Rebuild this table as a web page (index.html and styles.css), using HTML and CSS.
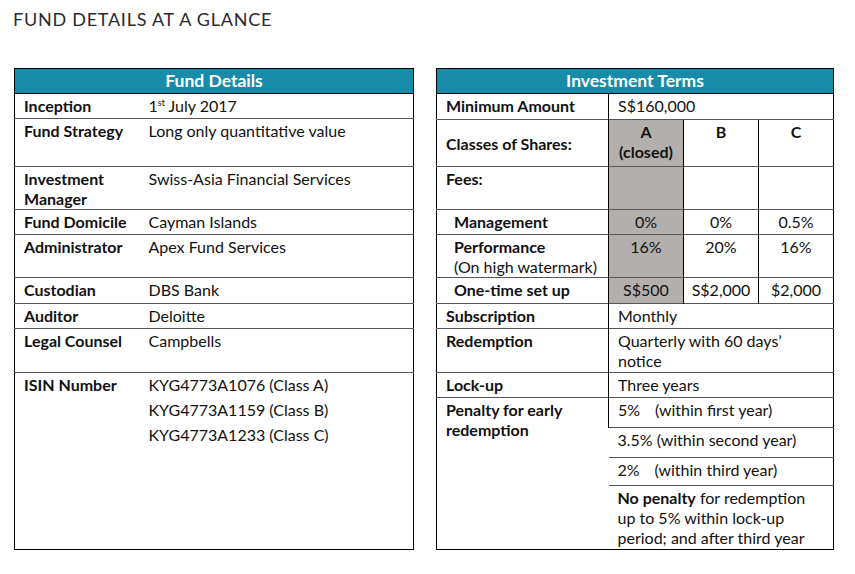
FILE: index.html
```html
<!DOCTYPE html>
<html lang="en">
  <head>
    <meta charset="UTF-8" />
    <meta name="viewport" content="width=device-width, initial-scale=1.0" />
    <title>Fund Details at a Glance</title>
    <link rel="stylesheet" href="styles.css">
  </head>
  <body>
    <div class="page">
      <h1 class="title">FUND DETAILS AT A GLANCE</h1>

      <div class="tables">
        <table class="facts details">
          <colgroup>
            <col class="details-label" />
            <col />
          </colgroup>
          <tr class="head"><th colspan="2">Fund Details</th></tr>
          <tr class="r25"><td class="label">Inception</td><td>1<sup>st</sup> July 2017</td></tr>
          <tr class="r48"><td class="label">Fund Strategy</td><td>Long only quantitative value</td></tr>
          <tr class="r43"><td class="label">Investment Manager</td><td>Swiss-Asia Financial Services</td></tr>
          <tr class="r25"><td class="label">Fund Domicile</td><td>Cayman Islands</td></tr>
          <tr class="r43"><td class="label">Administrator</td><td>Apex Fund Services</td></tr>
          <tr class="r26"><td class="label">Custodian</td><td>DBS Bank</td></tr>
          <tr class="r25"><td class="label">Auditor</td><td>Deloitte</td></tr>
          <tr class="r44"><td class="label">Legal Counsel</td><td>Campbells</td></tr>
          <tr class="r177">
            <td class="label">ISIN Number</td>
            <td>
              <div class="isin">KYG4773A1076 (Class A)</div>
              <div class="isin">KYG4773A1159 (Class B)</div>
              <div class="isin">KYG4773A1233 (Class C)</div>
            </td>
          </tr>
        </table>

        <table class="facts terms">
          <colgroup>
            <col class="terms-label" />
            <col class="share" />
            <col class="share" />
            <col class="share" />
          </colgroup>
          <tr class="head"><th colspan="4">Investment Terms</th></tr>
          <tr class="r26"><td class="label">Minimum Amount</td><td colspan="3">S$160,000</td></tr>
          <tr class="r47">
            <td class="label middle">Classes of Shares:</td>
            <td class="closed col bold">A<br />(closed)</td>
            <td class="col bold">B</td>
            <td class="col bold">C</td>
          </tr>
          <tr class="r43"><td class="label">Fees:</td><td class="closed"></td><td class="col"></td><td class="col"></td></tr>
          <tr class="r25">
            <td class="label sub">Management</td>
            <td class="closed col">0%</td><td class="col">0%</td><td class="col">0.5%</td>
          </tr>
          <tr class="r43">
            <td class="label sub">Performance<br /><span class="note">(On high watermark)</span></td>
            <td class="closed col">16%</td><td class="col">20%</td><td class="col">16%</td>
          </tr>
          <tr class="r26">
            <td class="label sub">One-time set up</td>
            <td class="closed col">S$500</td><td class="col">S$2,000</td><td class="col">$2,000</td>
          </tr>
          <tr class="r25"><td class="label">Subscription</td><td colspan="3">Monthly</td></tr>
          <tr class="r44"><td class="label">Redemption</td><td colspan="3">Quarterly with 60 days’<br />notice</td></tr>
          <tr class="r25"><td class="label">Lock-up</td><td colspan="3">Three years</td></tr>
          <tr class="r30">
            <td class="label" rowspan="4">Penalty for early<br />redemption</td>
            <td colspan="3"><span class="rate">5%</span>(within first year)</td>
          </tr>
          <tr class="r30"><td colspan="3">3.5% (within second year)</td></tr>
          <tr class="r28"><td colspan="3"><span class="rate">2%</span>(within third year)</td></tr>
          <tr class="r64">
            <td colspan="3"><b>No penalty</b> for redemption<br />up to 5% within lock-up<br />period; and after third year</td>
          </tr>
        </table>
      </div>
    </div>
  </body>
</html>
```

FILE: styles.css
```css
* {
  margin: 0;
  padding: 0;
  box-sizing: border-box;
}

body {
  background: #ffffff;
  color: #111111;
  font-family: Lato, "Open Sans", sans-serif;
}

.page {
  padding: 10px 0 0 13px;
}

.title {
  font-family: Lato, "Open Sans", sans-serif;
  font-weight: 400;
  font-size: 18px;
  line-height: 18px;
  letter-spacing: 0.75px;
  color: #2b2b2b;
  margin-bottom: 40px;
}

.tables {
  display: flex;
  gap: 22px;
  align-items: flex-start;
  padding-left: 1px;
}

.facts {
  border-collapse: collapse;
  table-layout: fixed;
  border: 1px solid #000;
  font-size: 16px;
  line-height: 20px;
}

.details {
  width: 400px;
}

.terms {
  width: 398px;
}

.details-label {
  width: 125px;
}

.terms-label {
  width: 172px;
}

.share {
  width: 75px;
}

.facts th {
  background: #178ba8;
  color: #ffffff;
  font-size: 17.5px;
  font-weight: 700;
  height: 25px;
  padding: 0;
  border: 1px solid #000;
  text-align: center;
}

.facts td {
  vertical-align: top;
  padding: 2px 6px 0 9px;
  border-top: 1px solid #555;
}

.terms td + td {
  border-left: 1px solid #000;
}

.label {
  font-weight: 700;
}

.label.sub {
  padding-left: 17px;
}

.label.middle {
  vertical-align: middle;
}

.note {
  font-weight: 400;
}

.bold {
  font-weight: 700;
}

.closed {
  background: #b2afad;
}

.terms td.col {
  text-align: center;
  padding-left: 2px;
  padding-right: 2px;
}

.isin {
  margin-bottom: 5px;
}

.rate {
  display: inline-block;
  width: 37px;
}

sup {
  font-size: 9px;
  line-height: 0;
}

.r25 { height: 25px; }
.r26 { height: 26px; }
.r28 { height: 28px; }
.r30 { height: 30px; }
.r43 { height: 43px; }
.r44 { height: 44px; }
.r47 { height: 47px; }
.r48 { height: 48px; }
.r64 { height: 64px; }
.r177 { height: 177px; }
```
